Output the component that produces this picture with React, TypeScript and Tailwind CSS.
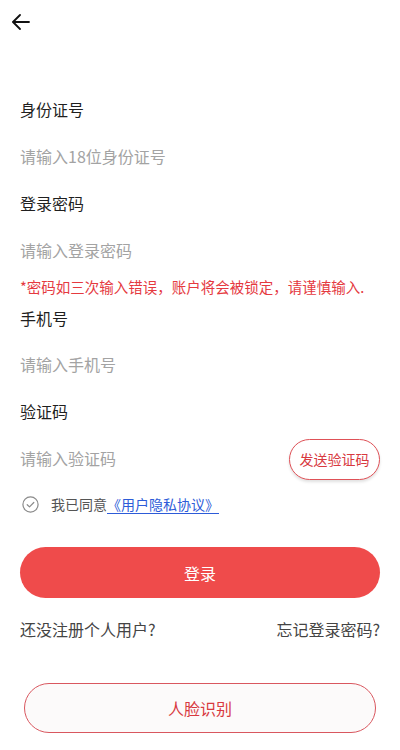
export default function App() {
  const font = { fontFamily: '"Noto Sans CJK SC", "Noto Sans", sans-serif' };
  return (
    <div className="w-[400px] h-[750px] bg-white overflow-hidden" style={font}>
      {/* header */}
      <div className="h-[44px] flex items-center px-[12px]">
        <svg width="18" height="16" viewBox="0 0 18 16" fill="none" stroke="#111" strokeWidth="1.8" strokeLinecap="round" strokeLinejoin="round">
          <path d="M17 8H1.5" />
          <path d="M8 1L1 8l7 7" />
        </svg>
      </div>

      <div className="mt-[41px] px-[20px]">
        <div className="h-[47px] flex items-center text-[16px] text-[#1f1f1f]">身份证号</div>
        <div className="h-[47px] flex items-center text-[16px] text-[#a3a3a3]">请输入18位身份证号</div>
        <div className="h-[47px] flex items-center text-[16px] text-[#1f1f1f]">登录密码</div>
        <div className="h-[47px] flex items-center text-[16px] text-[#a3a3a3]">请输入登录密码</div>
        <div className="h-[27px] flex items-center text-[14.5px] text-[#e53a3f] whitespace-nowrap">
          *密码如三次输入错误，账户将会被锁定，请谨慎输入.
        </div>
        <div className="h-[35px] flex items-center text-[16px] text-[#1f1f1f]">手机号</div>
        <div className="h-[58px] flex items-center text-[16px] text-[#a3a3a3]">请输入手机号</div>
        <div className="h-[36px] flex items-center text-[16px] text-[#1f1f1f]">验证码</div>
        <div className="h-[57px] flex items-center justify-between">
          <span className="text-[16px] text-[#a3a3a3]">请输入验证码</span>
          <button className="mt-[4px] w-[91px] h-[41px] rounded-full border border-[#df5157] bg-white text-[14px] text-[#d8393f] shadow-[0_2px_3px_rgba(0,0,0,0.12)] flex items-center justify-center">
            发送验证码
          </button>
        </div>

        <div className="h-[37px] flex items-center">
          <svg width="17" height="17" viewBox="0 0 17 17" fill="none" className="ml-[2px]">
            <circle cx="8.5" cy="8.5" r="7.6" stroke="#8a8a8a" strokeWidth="1.2" />
            <path d="M5.2 8.7l2.3 2.2 4.3-4.4" stroke="#8a8a8a" strokeWidth="1.2" strokeLinecap="round" strokeLinejoin="round" />
          </svg>
          <span className="ml-[12px] text-[14px] text-[#555]">我已同意</span>
          <span className="text-[14px] text-[#2d5bd8] underline underline-offset-[3px]">《用户隐私协议》</span>
        </div>

        <button className="mt-[24px] w-full h-[51px] rounded-full bg-[#ef4b4b] text-white text-[16px] flex items-center justify-center">
          登录
        </button>

        <div className="mt-[10px] h-[41px] flex items-center justify-between text-[16px] text-[#444]">
          <span>还没注册个人用户?</span>
          <span>忘记登录密码?</span>
        </div>

        <button className="mt-[34px] mx-[4px] w-[352px] h-[50px] rounded-full border border-[#d9575f] bg-[#fcfafa] text-[16px] text-[#d8393f] flex items-center justify-center">
          人脸识别
        </button>
      </div>
    </div>
  );
}
